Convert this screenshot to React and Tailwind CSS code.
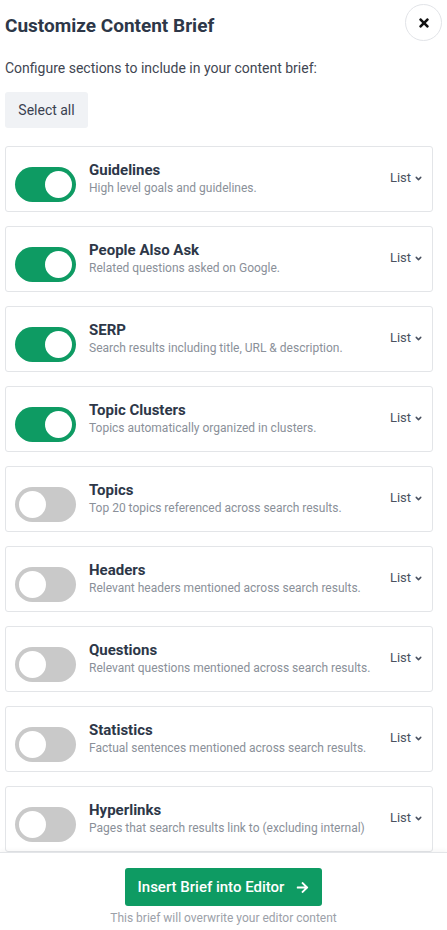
import { useState } from 'react';
import { FaTimes, FaArrowRight } from 'react-icons/fa';
import { ChevronDown } from 'lucide-react';

const SECTIONS = [
  { name: 'Guidelines', desc: 'High level goals and guidelines.', on: true },
  { name: 'People Also Ask', desc: 'Related questions asked on Google.', on: true },
  { name: 'SERP', desc: 'Search results including title, URL & description.', on: true },
  { name: 'Topic Clusters', desc: 'Topics automatically organized in clusters.', on: true },
  { name: 'Topics', desc: 'Top 20 topics referenced across search results.', on: false },
  { name: 'Headers', desc: 'Relevant headers mentioned across search results.', on: false },
  { name: 'Questions', desc: 'Relevant questions mentioned across search results.', on: false },
  { name: 'Statistics', desc: 'Factual sentences mentioned across search results.', on: false },
  { name: 'Hyperlinks', desc: 'Pages that search results link to (excluding internal)', on: false },
];

function Toggle({ on, onClick }) {
  return (
    <button
      onClick={onClick}
      className={`mt-[11px] flex-shrink-0 w-[61px] h-[35px] rounded-full flex items-center px-[4px] ${on ? 'bg-[#0e9b63] justify-end' : 'bg-[#c9c9c9] justify-start'}`}>
      <span className="w-[27px] h-[27px] rounded-full bg-white block" />
    </button>
  );
}

export default function App() {
  const [sections, setSections] = useState(SECTIONS);

  function toggle(name) {
    setSections(ss => ss.map(s => s.name === name ? { ...s, on: !s.on } : s));
  }

  return (
    <div className="w-[447px] h-[930px] bg-white flex flex-col font-['Roboto',sans-serif] overflow-hidden">
      <div className="flex-1 pl-[5px] pr-[5px]">
        <div className="flex items-start justify-between pt-[4px]">
          <h1 className="mt-[8px] text-[19px] leading-[28px] font-bold text-[#2d3748]">Customize Content Brief</h1>
          <button className="w-[37px] h-[37px] rounded-full border border-[#e2e4e8] flex items-center justify-center text-[#111]">
            <FaTimes size={14} />
          </button>
        </div>
        <p className="mt-[17px] text-[14px] leading-[20px] text-[#3f4652]">Configure sections to include in your content brief:</p>
        <button
          onClick={() => setSections(ss => ss.map(s => ({ ...s, on: true })))}
          className="mt-[14px] w-[83px] h-[36px] rounded-[3px] bg-[#f0f2f5] text-[14px] text-[#3a4150]">
          Select all
        </button>

        <div className="mt-[18px] w-[428px] flex flex-col gap-[14px]">
          {sections.map(s => (
            <div key={s.name} className="h-[66px] border border-[#e3e5e8] rounded-[3px] flex items-center pl-[9px] pr-[9px]">
              <Toggle on={s.on} onClick={() => toggle(s.name)} />
              <div className="flex-1 ml-[13px] min-w-0 -mt-[2px]">
                <div className="text-[15px] leading-[20px] font-bold text-[#2d3748]">{s.name}</div>
                <div className="text-[12px] leading-[17px] text-[#8a9099] whitespace-nowrap">{s.desc}</div>
              </div>
              <button className="flex items-center gap-[3px] text-[13px] text-[#4a5160] -mt-[2px]">
                List <ChevronDown size={9} strokeWidth={4} />
              </button>
            </div>
          ))}
        </div>
      </div>

      <div className="h-[78px] border-t border-[#e3e5e8] shadow-[0_-2px_4px_rgba(0,0,0,0.04)] flex flex-col items-center pt-[15px]">
        <button className="w-[197px] h-[38px] rounded-[3px] bg-[#0e9b63] text-white text-[15px] font-medium flex items-center justify-center gap-[12px]">
          Insert Brief into Editor <FaArrowRight size={13} />
        </button>
        <p className="mt-[5px] text-[12px] leading-[14px] text-[#9ca1a9]">This brief will overwrite your editor content</p>
      </div>
    </div>
  );
}
